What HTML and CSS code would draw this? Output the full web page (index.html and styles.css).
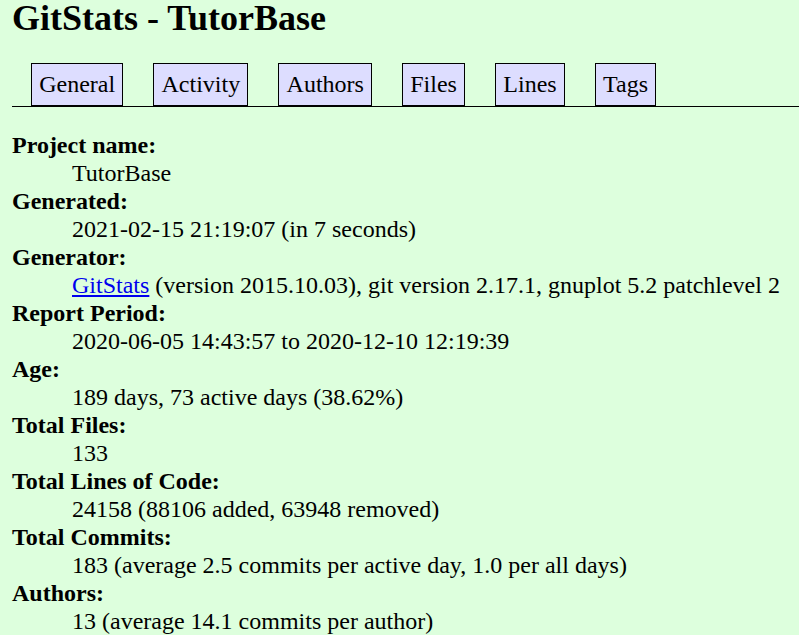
FILE: index.html
```html
<!DOCTYPE html>
<html>
<head>
<meta charset="utf-8">
<title>GitStats - TutorBase</title>
<link rel="stylesheet" href="styles.css">
</head>
<body>
<h1>GitStats - TutorBase</h1>
<div class="nav">
  <ul>
    <li><a href="#">General</a></li>
    <li><a href="#">Activity</a></li>
    <li><a href="#">Authors</a></li>
    <li><a href="#">Files</a></li>
    <li><a href="#">Lines</a></li>
    <li><a href="#">Tags</a></li>
  </ul>
</div>
<dl class="info">
  <dt>Project name:</dt>
  <dd>TutorBase</dd>
  <dt>Generated:</dt>
  <dd>2021-02-15 21:19:07 (in 7 seconds)</dd>
  <dt>Generator:</dt>
  <dd><a class="link" href="#">GitStats</a> (version 2015.10.03), git version 2.17.1, gnuplot 5.2 patchlevel 2</dd>
  <dt>Report Period:</dt>
  <dd>2020-06-05 14:43:57 to 2020-12-10 12:19:39</dd>
  <dt>Age:</dt>
  <dd>189 days, 73 active days (38.62%)</dd>
  <dt>Total Files:</dt>
  <dd>133</dd>
  <dt>Total Lines of Code:</dt>
  <dd>24158 (88106 added, 63948 removed)</dd>
  <dt>Total Commits:</dt>
  <dd>183 (average 2.5 commits per active day, 1.0 per all days)</dd>
  <dt>Authors:</dt>
  <dd>13 (average 14.1 commits per author)</dd>
</dl>
</body>
</html>
```
FILE: styles.css
```css
body {
  margin: 0;
  padding: 0 0 0 12px;
  background-color: #ddffdd;
  color: #000;
  font-family: "Liberation Serif", "Times New Roman", serif;
  font-size: 24px;
}

h1 {
  font-size: 36px;
  line-height: 38px;
  margin: 0;
  font-weight: bold;
  position: relative;
  top: -1px;
}

.nav {
  margin-top: 25px;
  border-bottom: 1px solid #000;
  padding-left: 19px;
}

.nav ul {
  list-style: none;
  margin: 0;
  padding: 0;
  display: flex;
  gap: 30px;
}

.nav li a {
  display: block;
  border: 1px solid #000;
  background-color: #ddddff;
  padding: 7px 7.2px;
  line-height: 27px;
  color: #000;
  text-decoration: none;
}

.info {
  margin: 24px 0 0;
  line-height: 28px;
}

.info dt {
  font-weight: bold;
}

.info dd {
  margin-left: 60px;
}

.link {
  color: #0000ee;
  text-decoration: underline;
}
```
